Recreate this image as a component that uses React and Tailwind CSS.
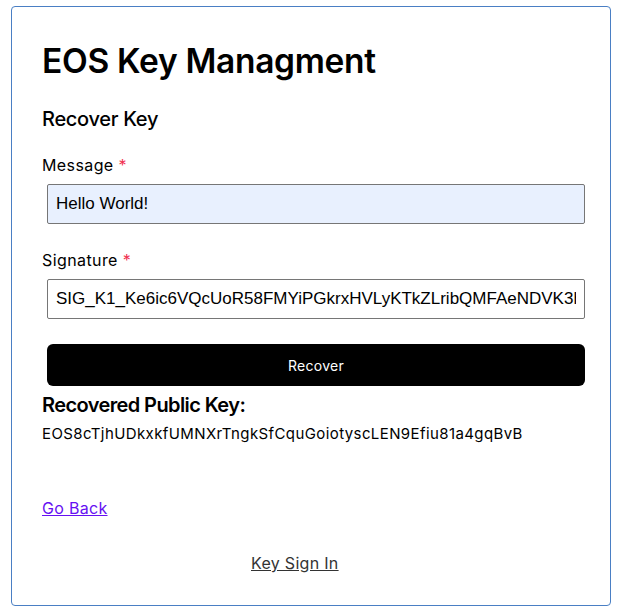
import { useState } from "react";

const sig =
    "SIG_K1_Ke6ic6VQcUoR58FMYiPGkrxHVLyKTkZLribQMFAeNDVK3hZ7yGQ1r7oMbt9fsQnq2Ee7xYjcSpP4gW8zmJ4fk1VK1cUpN";

export default function App() {
    const [message, setMessage] = useState("Hello World!");
    const [signature, setSignature] = useState(sig);

    return (
        <div className="w-[618px] h-[616px] bg-white pt-[6px] pl-[11px] font-['Inter',sans-serif] text-black">
            <div className="w-[600px] h-[600px] border border-[#4a7fc4] rounded-[4px] px-[30px] flex flex-col">
                <h1 className="text-[33.5px] font-semibold leading-[48px] mt-[30px] tracking-[-0.3px]">
                    EOS Key Managment
                </h1>

                <h2 className="text-[20px] font-medium leading-[30px] mt-[19px] tracking-[-0.3px]">
                    Recover Key
                </h2>

                <label className="text-[16px] leading-[24px] mt-[19px] tracking-[0.4px]">
                    Message <span className="text-[#f0304f]">*</span>
                </label>
                <input
                    className="w-full ml-[5px] mt-[7px] h-[40px] border border-[#767676] rounded-[2px] bg-[#e8f0fe] px-[8px] text-[17px] font-['Liberation_Sans',sans-serif] outline-none"
                    value={message}
                    onChange={(e) => setMessage(e.target.value)}
                />

                <label className="text-[16px] leading-[24px] mt-[24px] tracking-[0.4px]">
                    Signature <span className="text-[#f0304f]">*</span>
                </label>
                <input
                    className="w-full ml-[5px] mt-[7px] h-[40px] border border-[#767676] rounded-[2px] bg-white px-[8px] text-[17px] font-['Liberation_Sans',sans-serif] outline-none"
                    value={signature}
                    onChange={(e) => setSignature(e.target.value)}
                />

                <button
                    type="button"
                    className="w-full ml-[5px] mt-[25px] h-[42px] bg-black text-white rounded-[6px] text-[14px] tracking-[0.3px]"
                >
                    Recover
                </button>

                <h3 className="text-[20px] font-semibold leading-[30px] mt-[4px] tracking-[-0.6px]">
                    Recovered Public Key:
                </h3>
                <p className="text-[15px] leading-[21px] mt-[3px] tracking-[0.4px]">
                    EOS8cTjhUDkxkfUMNXrTngkSfCquGoiotyscLEN9Efiu81a4gqBvB
                </p>

                <a href="#" className="text-[16px] leading-[24px] mt-[52px] text-[#6610f2] underline self-start tracking-[0.3px]">
                    Go Back
                </a>

                <a href="#" className="text-[16px] leading-[24px] mt-[31px] text-[#333333] underline self-start ml-[209px] tracking-[0.3px]">
                    Key Sign In
                </a>
            </div>
        </div>
    );
}
